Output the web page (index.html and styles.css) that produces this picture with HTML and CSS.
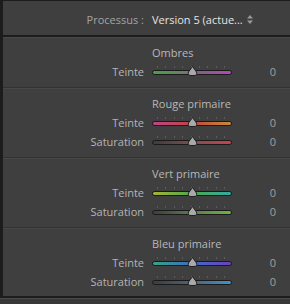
FILE: index.html
```html
<!DOCTYPE html>
<html lang="fr">
<head>
    <meta charset="UTF-8">
    <meta name="viewport" content="width=device-width, initial-scale=1.0">
    <title>Processus</title>
    <link rel="stylesheet" href="styles.css">
</head>
<body>
    <div class="panel">
        <div class="header">
            <span class="label">Processus :</span>
            <span class="proc-value">Version 5 (actue...</span>
            <svg class="updown" width="6" height="9" viewBox="0 0 6 9">
                <path d="M3 0 L6 3.5 L0 3.5 Z M3 9 L6 5.5 L0 5.5 Z" fill="#9a9a9a"/>
            </svg>
        </div>

        <!-- Ombres -->
        <div class="section">
            <div class="title">Ombres</div>
            <div class="row">
                <span class="label">Teinte</span>
                <div class="slider">
                    <div class="ticks"></div>
                    <div class="track tr-shadow"></div>
                    <svg class="thumb" width="11" height="10" viewBox="0 0 11 10"><path d="M5.5 0.5 L9.5 6 Q10.5 9.5 7 9.5 L4 9.5 Q0.5 9.5 1.5 6 Z" fill="#a9a9a9" stroke="#1e1e1e"/></svg>
                </div>
                <span class="value">0</span>
            </div>
        </div>

        <!-- Rouge primaire -->
        <div class="section">
            <div class="title">Rouge primaire</div>
            <div class="row">
                <span class="label">Teinte</span>
                <div class="slider">
                    <div class="ticks"></div>
                    <div class="track tr-red-hue"></div>
                    <svg class="thumb" width="11" height="10" viewBox="0 0 11 10"><path d="M5.5 0.5 L9.5 6 Q10.5 9.5 7 9.5 L4 9.5 Q0.5 9.5 1.5 6 Z" fill="#a9a9a9" stroke="#1e1e1e"/></svg>
                </div>
                <span class="value">0</span>
            </div>
            <div class="row">
                <span class="label">Saturation</span>
                <div class="slider">
                    <div class="ticks"></div>
                    <div class="track tr-red-sat"></div>
                    <svg class="thumb" width="11" height="10" viewBox="0 0 11 10"><path d="M5.5 0.5 L9.5 6 Q10.5 9.5 7 9.5 L4 9.5 Q0.5 9.5 1.5 6 Z" fill="#a9a9a9" stroke="#1e1e1e"/></svg>
                </div>
                <span class="value">0</span>
            </div>
        </div>

        <!-- Vert primaire -->
        <div class="section">
            <div class="title">Vert primaire</div>
            <div class="row">
                <span class="label">Teinte</span>
                <div class="slider">
                    <div class="ticks"></div>
                    <div class="track tr-green-hue"></div>
                    <svg class="thumb" width="11" height="10" viewBox="0 0 11 10"><path d="M5.5 0.5 L9.5 6 Q10.5 9.5 7 9.5 L4 9.5 Q0.5 9.5 1.5 6 Z" fill="#a9a9a9" stroke="#1e1e1e"/></svg>
                </div>
                <span class="value">0</span>
            </div>
            <div class="row">
                <span class="label">Saturation</span>
                <div class="slider">
                    <div class="ticks"></div>
                    <div class="track tr-green-sat"></div>
                    <svg class="thumb" width="11" height="10" viewBox="0 0 11 10"><path d="M5.5 0.5 L9.5 6 Q10.5 9.5 7 9.5 L4 9.5 Q0.5 9.5 1.5 6 Z" fill="#a9a9a9" stroke="#1e1e1e"/></svg>
                </div>
                <span class="value">0</span>
            </div>
        </div>

        <!-- Bleu primaire -->
        <div class="section">
            <div class="title">Bleu primaire</div>
            <div class="row">
                <span class="label">Teinte</span>
                <div class="slider">
                    <div class="ticks"></div>
                    <div class="track tr-blue-hue"></div>
                    <svg class="thumb" width="11" height="10" viewBox="0 0 11 10"><path d="M5.5 0.5 L9.5 6 Q10.5 9.5 7 9.5 L4 9.5 Q0.5 9.5 1.5 6 Z" fill="#a9a9a9" stroke="#1e1e1e"/></svg>
                </div>
                <span class="value">0</span>
            </div>
            <div class="row">
                <span class="label">Saturation</span>
                <div class="slider">
                    <div class="ticks"></div>
                    <div class="track tr-blue-sat"></div>
                    <svg class="thumb" width="11" height="10" viewBox="0 0 11 10"><path d="M5.5 0.5 L9.5 6 Q10.5 9.5 7 9.5 L4 9.5 Q0.5 9.5 1.5 6 Z" fill="#a9a9a9" stroke="#1e1e1e"/></svg>
                </div>
                <span class="value">0</span>
            </div>
        </div>
    </div>
    <div class="footer"></div>
</body>
</html>
```

FILE: styles.css
```css
body {
    margin: 0;
    background: #383838;
    font-family: "Open Sans", "Noto Sans", sans-serif;
    font-size: 11px;
    color: #b4b4b4;
    width: 290px;
    height: 304px;
    overflow: hidden;
}
.panel {
    background: #3f3f3f;
    border-top: 1px solid #1c1c1c;
    border-left: 3px solid #1c1c1c;
    border-bottom: 2px solid #1c1c1c;
}
.header {
    display: flex;
    align-items: center;
    height: 32px;
    padding-top: 2px;
    border-bottom: 2px solid #1c1c1c;
}
.label {
    width: 141px;
    text-align: right;
    margin-right: 8px;
    flex-shrink: 0;
}
.header .label {
    color: #a4a4a4;
}
.proc-value {
    color: #e4e4e4;
}
.updown {
    margin-left: 4px;
}
.section {
    padding: 5px 0 6px;
    border-top: 1px solid #484848;
    border-bottom: 1px solid #323232;
}
.section:last-child {
    border-bottom: none;
    padding-bottom: 5px;
}
.title {
    height: 19px;
    line-height: 19px;
    padding-left: 149px;
    color: #b8b8b8;
}
.row {
    display: flex;
    align-items: center;
    height: 19px;
    line-height: 19px;
}
.slider {
    position: relative;
    width: 80px;
    height: 19px;
}
.ticks {
    position: absolute;
    top: 4px;
    left: 5px;
    width: 70px;
    height: 2px;
    background: repeating-linear-gradient(to right, #5c5c5c 0 1px, transparent 1px 8.4px);
}
.track {
    position: absolute;
    top: 8px;
    left: 0;
    right: 0;
    height: 3px;
    border: 1px solid #1a1a1a;
    border-radius: 3px;
}
.thumb {
    position: absolute;
    top: 4px;
    left: 35px;
}
.value {
    width: 44px;
    text-align: right;
    color: #a0a0a0;
}
.tr-shadow {
    background: linear-gradient(to right, #4b9e46, #6f7a6e 45%, #806080 55%, #ad4cb4);
}
.tr-red-hue {
    background: linear-gradient(to right, #c0428c, #c2443e 50%, #cc8a32);
}
.tr-red-sat {
    background: linear-gradient(to right, #3c3c3c, #7a5050 50%, #c8424a);
}
.tr-green-hue {
    background: linear-gradient(to right, #a6b234, #4ea84c 50%, #2eaaa4);
}
.tr-green-sat {
    background: linear-gradient(to right, #3c3c3c, #5e7a50 50%, #72b044);
}
.tr-blue-hue {
    background: linear-gradient(to right, #34a486, #3c6cc4 50%, #6a40c4);
}
.tr-blue-sat {
    background: linear-gradient(to right, #3c3c3c, #4e6478 50%, #4490c4);
}
.footer {
    height: 1px;
    background: #4a4a4a;
}
```
